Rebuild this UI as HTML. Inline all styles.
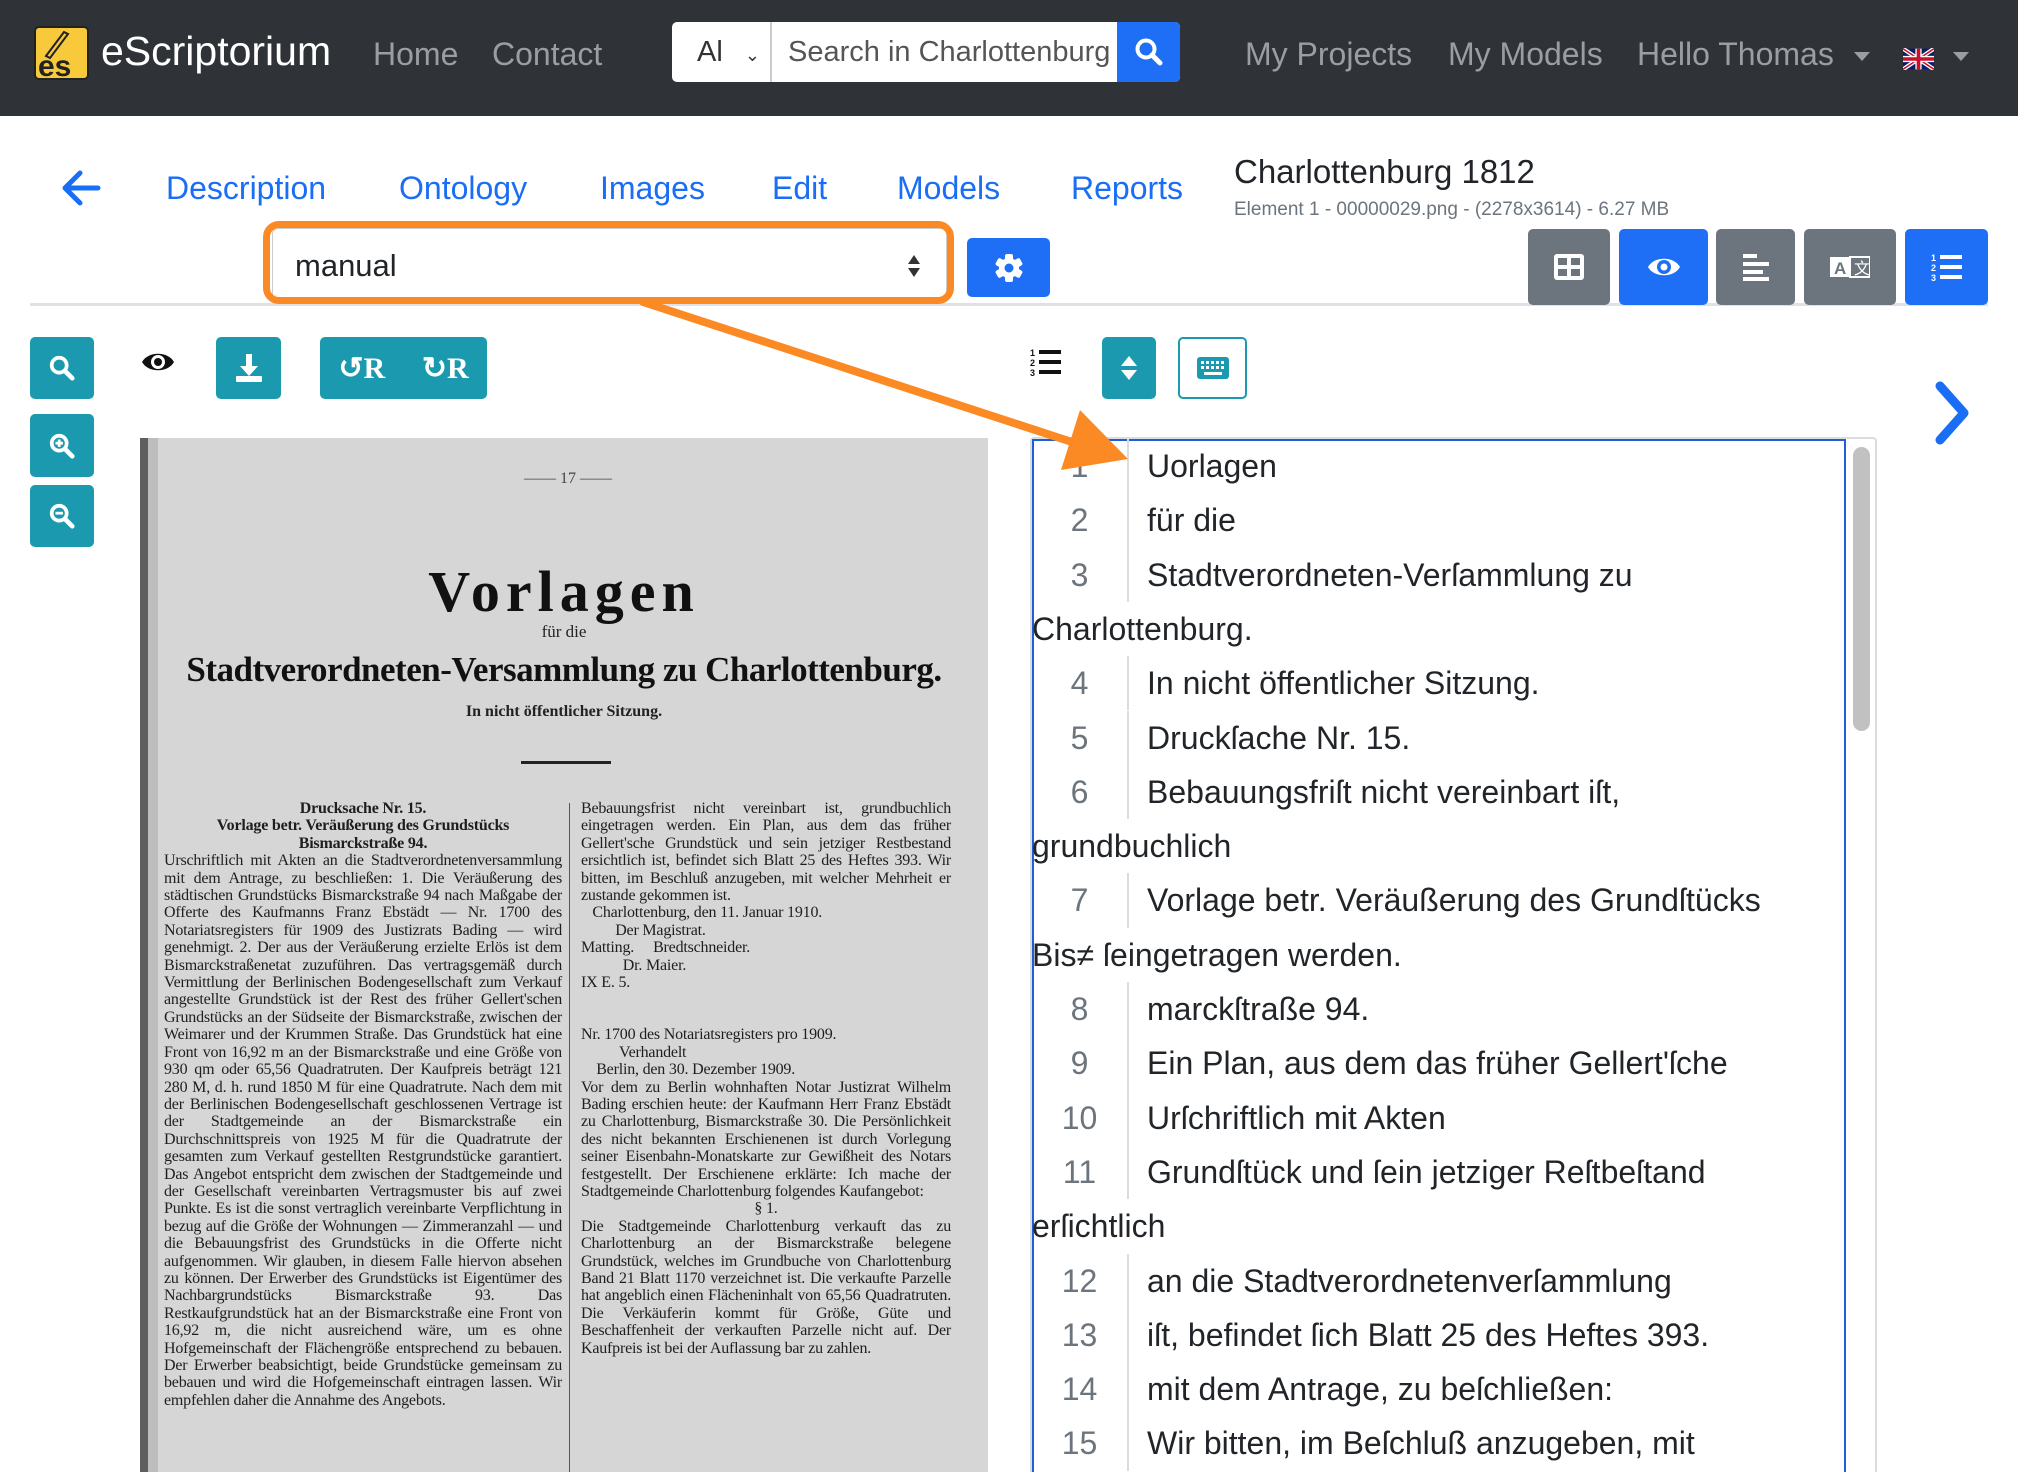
<!DOCTYPE html>
<html><head><meta charset="utf-8">
<style>
*{box-sizing:border-box;margin:0;padding:0}
body{width:2018px;height:1472px;overflow:hidden;background:#fff;font-family:"Liberation Sans",sans-serif;position:relative}
.a{position:absolute}
.nav{left:0;top:0;width:2018px;height:116px;background:#2f3337}
.nl{color:#9b9ea1;font-size:32px;top:36px}
.tab{color:#1a6ef5;font-size:32px;top:170px}
.btn{position:absolute;border-radius:5px;display:flex;align-items:center;justify-content:center}
.teal{background:#1b9aaf}
.gray{background:#6c757d}
.blue{background:#1e6ff5}
.row{position:absolute;left:1032px;width:810px;height:54.3px;line-height:54.3px;font-size:32px;color:#212529;white-space:nowrap}
.row .n{position:absolute;left:0;width:97px;text-align:center;color:#6c757d;border-right:2px solid #dcdcdc;height:54.3px}
.row .t{position:absolute;left:115px}
.scan{left:140px;top:438px;width:848px;height:1034px;background:#d6d6d6;overflow:hidden;font-family:"Liberation Serif",serif;color:#2a2a2a}
.col{position:absolute;font-size:16px;line-height:17.4px;text-align:justify;color:#1e1e1e;letter-spacing:-0.2px}
</style></head><body>
<div class="a nav"></div>
<svg class="a" style="left:34px;top:26px" width="55" height="54" viewBox="0 0 55 54"><rect x="1" y="1" width="53" height="52" rx="4" fill="#f7c93b" stroke="#222" stroke-width="2"/><path d="M12 30 L30 6 L34 8 L16 32Z" fill="none" stroke="#222" stroke-width="2"/><text x="4" y="50" font-family="Liberation Sans" font-size="30" font-weight="bold" fill="#222">es</text></svg>
<div class="a" style="left:101px;top:28px;font-size:41px;color:#fff">eScriptorium</div>
<div class="a nl" style="left:373px">Home</div>
<div class="a nl" style="left:492px">Contact</div>
<div class="a" style="left:672px;top:22px;width:508px;height:60px;background:#fff;border-radius:5px;overflow:hidden">
 <div class="a" style="left:0;top:0;width:100px;height:60px;border-right:2px solid #ccc;font-size:29px;line-height:60px;padding-left:25px;color:#333">Al <span style="font-size:18px;margin-left:14px">&#8964;</span></div>
 <div class="a" style="left:116px;top:0;font-size:29px;line-height:60px;color:#555;white-space:nowrap;width:326px;overflow:hidden">Search in Charlottenburg</div>
 <div class="a blue" style="left:445px;top:0;width:63px;height:60px"><svg style="position:absolute;left:17px;top:15px" width="30" height="30" viewBox="0 0 30 30"><circle cx="12" cy="12" r="8.5" fill="none" stroke="#fff" stroke-width="4"/><path d="M18 18l8 8" stroke="#fff" stroke-width="5" stroke-linecap="round"/></svg></div>
</div>
<div class="a nl" style="left:1245px">My Projects</div>
<div class="a nl" style="left:1448px">My Models</div>
<div class="a nl" style="left:1637px">Hello Thomas</div>
<div class="a" style="left:1854px;top:52px;border:8px solid transparent;border-top:9px solid #9b9ea1"></div>
<svg class="a" style="left:1903px;top:48px" width="31" height="22" viewBox="0 0 60 40"><rect width="60" height="40" fill="#012169"/><path d="M0 0L60 40M60 0L0 40" stroke="#fff" stroke-width="8"/><path d="M0 0L60 40M60 0L0 40" stroke="#c8102e" stroke-width="3"/><path d="M30 0V40M0 20H60" stroke="#fff" stroke-width="12"/><path d="M30 0V40M0 20H60" stroke="#c8102e" stroke-width="7"/></svg>
<div class="a" style="left:1953px;top:52px;border:8px solid transparent;border-top:9px solid #9b9ea1"></div>

<svg class="a" style="left:60px;top:168px" width="42" height="40" viewBox="0 0 42 40"><path d="M38 20H6M20 5L5 20l15 15" fill="none" stroke="#1a6ef5" stroke-width="5" stroke-linecap="round" stroke-linejoin="round"/></svg>
<div class="a tab" style="left:166px">Description</div>
<div class="a tab" style="left:399px">Ontology</div>
<div class="a tab" style="left:600px">Images</div>
<div class="a tab" style="left:772px">Edit</div>
<div class="a tab" style="left:897px">Models</div>
<div class="a tab" style="left:1071px">Reports</div>
<div class="a" style="left:1234px;top:153px;font-size:33px;color:#212529">Charlottenburg 1812</div>
<div class="a" style="left:1234px;top:199px;font-size:19px;color:#6c757d">Element 1 - 00000029.png - (2278x3614) - 6.27 MB</div>

<div class="a" style="left:30px;top:303px;width:1958px;height:3px;background:#dee2e6"></div>
<div class="a" style="left:272px;top:228px;width:675px;height:74px;border:1px solid #ccc;border-radius:6px;background:#fff"></div>
<div class="a" style="left:263px;top:221px;width:691px;height:83px;border:7px solid #fb8a24;border-radius:16px"></div>
<div class="a" style="left:295px;top:248px;font-size:31px;color:#212529">manual</div>
<svg class="a" style="left:905px;top:253px" width="18" height="26" viewBox="0 0 18 26"><path d="M9 2l6 9H3zM9 24l6-9H3z" fill="#333"/></svg>
<div class="btn blue" style="left:967px;top:238px;width:83px;height:59px"><svg width="32" height="32" viewBox="0 0 32 32"><g fill="#fff"><circle cx="16" cy="16" r="10"/><rect x="12" y="2" width="8" height="28" rx="2"/><rect x="12" y="2" width="8" height="28" rx="2" transform="rotate(60 16 16)"/><rect x="12" y="2" width="8" height="28" rx="2" transform="rotate(120 16 16)"/></g><circle cx="16" cy="16" r="4.5" fill="#1e6ff5"/></svg></div>

<div class="btn gray" style="left:1528px;top:229px;width:82px;height:76px"><svg width="32" height="28" viewBox="0 0 32 28"><rect x="1" y="1" width="30" height="26" rx="3" fill="#fff"/><rect x="5" y="5" width="9" height="7" fill="#6c757d"/><rect x="18" y="5" width="9" height="7" fill="#6c757d"/><rect x="5" y="16" width="9" height="7" fill="#6c757d"/><rect x="18" y="16" width="9" height="7" fill="#6c757d"/></svg></div>
<div class="btn blue" style="left:1619px;top:229px;width:89px;height:76px"><svg width="36" height="26" viewBox="0 0 36 26"><path d="M2 13C8 2 28 2 34 13C28 24 8 24 2 13Z" fill="#fff"/><circle cx="18" cy="13" r="7" fill="#1e6ff5"/><circle cx="18" cy="13" r="3.5" fill="#fff"/></svg></div>
<div class="btn gray" style="left:1716px;top:229px;width:79px;height:76px"><svg width="30" height="30" viewBox="0 0 30 30" fill="#fff"><rect x="2" y="2" width="14" height="4"/><rect x="2" y="10" width="26" height="4"/><rect x="2" y="18" width="20" height="4"/><rect x="2" y="25" width="26" height="4"/></svg></div>
<div class="btn gray" style="left:1804px;top:229px;width:92px;height:76px"><svg width="40" height="24" viewBox="0 0 40 24"><rect x="0" y="2" width="20" height="20" fill="#fff"/><rect x="20" y="2" width="20" height="20" fill="none" stroke="#fff" stroke-width="2"/><text x="4" y="19" font-size="17" font-family="Liberation Sans" font-weight="bold" fill="#6c757d">A</text><text x="24" y="19" font-size="16" fill="#fff" font-family="Liberation Sans">文</text></svg></div>
<div class="btn blue" style="left:1905px;top:229px;width:83px;height:76px"><svg width="32" height="30" viewBox="0 0 32 30" fill="#fff"><text x="0" y="9" font-size="9" font-family="Liberation Sans" font-weight="bold">1</text><text x="0" y="19" font-size="9" font-family="Liberation Sans" font-weight="bold">2</text><text x="0" y="29" font-size="9" font-family="Liberation Sans" font-weight="bold">3</text><rect x="9" y="3" width="22" height="4"/><rect x="9" y="13" width="22" height="4"/><rect x="9" y="23" width="22" height="4"/></svg></div>

<div class="btn teal" style="left:30px;top:337px;width:64px;height:62px"><svg width="28" height="28" viewBox="0 0 30 30"><circle cx="12" cy="12" r="8" fill="none" stroke="#fff" stroke-width="4"/><path d="M18 18l8 8" stroke="#fff" stroke-width="5" stroke-linecap="round"/></svg></div>
<svg class="a" style="left:139px;top:349px" width="38" height="26" viewBox="0 0 36 26"><path d="M2 13C8 2 28 2 34 13C28 24 8 24 2 13Z" fill="#111"/><circle cx="18" cy="13" r="7" fill="#fff"/><circle cx="18" cy="13" r="4" fill="#111"/></svg>
<div class="btn teal" style="left:216px;top:337px;width:65px;height:62px"><svg width="30" height="32" viewBox="0 0 30 32" fill="#fff"><rect x="12" y="2" width="6" height="14"/><path d="M6 14h18l-9 10z"/><rect x="2" y="24" width="26" height="6" rx="1"/></svg></div>
<div class="btn teal" style="left:320px;top:337px;width:167px;height:62px;color:#fff;font-family:'Liberation Serif',serif;font-weight:bold;font-size:30px;justify-content:space-around">
 <span>&#8634;R</span><span>&#8635;R</span></div>
<div class="btn teal" style="left:30px;top:414px;width:64px;height:63px"><svg width="28" height="28" viewBox="0 0 30 30"><circle cx="12" cy="12" r="8" fill="none" stroke="#fff" stroke-width="4"/><path d="M18 18l8 8" stroke="#fff" stroke-width="5" stroke-linecap="round"/><path d="M8 12h8M12 8v8" stroke="#fff" stroke-width="3"/></svg></div>
<div class="btn teal" style="left:30px;top:485px;width:64px;height:62px"><svg width="28" height="28" viewBox="0 0 30 30"><circle cx="12" cy="12" r="8" fill="none" stroke="#fff" stroke-width="4"/><path d="M18 18l8 8" stroke="#fff" stroke-width="5" stroke-linecap="round"/><path d="M8 12h8" stroke="#fff" stroke-width="3"/></svg></div>

<svg class="a" style="left:1029px;top:347px" width="34" height="30" viewBox="0 0 32 30" fill="#111"><text x="0" y="9" font-size="9" font-family="Liberation Sans" font-weight="bold">1</text><text x="0" y="19" font-size="9" font-family="Liberation Sans" font-weight="bold">2</text><text x="0" y="29" font-size="9" font-family="Liberation Sans" font-weight="bold">3</text><rect x="9" y="3" width="22" height="4"/><rect x="9" y="13" width="22" height="4"/><rect x="9" y="23" width="22" height="4"/></svg>
<div class="btn teal" style="left:1102px;top:337px;width:54px;height:62px"><svg width="18" height="28" viewBox="0 0 18 28" fill="#fff"><path d="M9 2l8 10H1zM9 26l8-10H1z"/></svg></div>
<div class="btn" style="left:1178px;top:337px;width:69px;height:62px;border:2px solid #1b9aaf"><svg width="32" height="22" viewBox="0 0 32 22"><rect x="0" y="0" width="32" height="22" rx="3" fill="#1b9aaf"/><g fill="#fff"><rect x="4" y="4" width="3" height="3"/><rect x="9" y="4" width="3" height="3"/><rect x="14" y="4" width="3" height="3"/><rect x="19" y="4" width="3" height="3"/><rect x="24" y="4" width="3" height="3"/><rect x="4" y="9" width="3" height="3"/><rect x="9" y="9" width="3" height="3"/><rect x="14" y="9" width="3" height="3"/><rect x="19" y="9" width="3" height="3"/><rect x="24" y="9" width="3" height="3"/><rect x="7" y="15" width="18" height="3"/></g></svg></div>
<svg class="a" style="left:1932px;top:380px" width="40" height="66" viewBox="0 0 40 66"><path d="M8 6l24 27L8 60" fill="none" stroke="#1a6ef5" stroke-width="9" stroke-linecap="round" stroke-linejoin="round"/></svg>

<div class="a scan">
 <div class="a" style="left:0;top:0;width:8px;height:1034px;background:#5e5e5e"></div>
 <div class="a" style="left:8px;top:0;width:10px;height:1034px;background:#bdbdbd"></div>
 <div class="a" style="left:384px;top:32px;font-size:16px;color:#444">—— 17 ——</div>
 <div class="a" style="left:0;width:848px;top:120px;text-align:center;font-size:58px;font-weight:bold;letter-spacing:6px;color:#111">Vorlagen</div>
 <div class="a" style="left:0;width:848px;top:184px;text-align:center;font-size:17px;color:#222">für die</div>
 <div class="a" style="left:0;width:848px;top:212px;text-align:center;font-size:35px;font-weight:bold;color:#111;letter-spacing:-0.5px">Stadtverordneten-Versammlung zu Charlottenburg.</div>
 <div class="a" style="left:0;width:848px;top:265px;text-align:center;font-size:16px;font-weight:bold;color:#222">In nicht öffentlicher Sitzung.</div>
 <div class="a" style="left:381px;top:323px;width:90px;height:3px;background:#222"></div>
 <div class="a" style="left:429px;top:365px;width:1px;height:670px;background:#555"></div>
 <div class="col" style="left:24px;top:362px;width:398px">
 <div style="text-align:center;font-weight:bold">Drucksache Nr. 15.</div>
 <div style="text-align:center;font-weight:bold">Vorlage betr. Veräußerung des Grundstücks Bismarckstraße 94.</div>
 Urschriftlich mit Akten an die Stadtverordnetenversammlung mit dem Antrage, zu beschließen: 1. Die Veräußerung des städtischen Grundstücks Bismarckstraße 94 nach Maßgabe der Offerte des Kaufmanns Franz Ebstädt — Nr. 1700 des Notariatsregisters für 1909 des Justizrats Bading — wird genehmigt. 2. Der aus der Veräußerung erzielte Erlös ist dem Bismarckstraßenetat zuzuführen. Das vertragsgemäß durch Vermittlung der Berlinischen Bodengesellschaft zum Verkauf angestellte Grundstück ist der Rest des früher Gellert'schen Grundstücks an der Südseite der Bismarckstraße, zwischen der Weimarer und der Krummen Straße. Das Grundstück hat eine Front von 16,92 m an der Bismarckstraße und eine Größe von 930 qm oder 65,56 Quadratruten. Der Kaufpreis beträgt 121 280 M, d. h. rund 1850 M für eine Quadratrute. Nach dem mit der Berlinischen Bodengesellschaft geschlossenen Vertrage ist der Stadtgemeinde an der Bismarckstraße ein Durchschnittspreis von 1925 M für die Quadratrute der gesamten zum Verkauf gestellten Restgrundstücke garantiert. Das Angebot entspricht dem zwischen der Stadtgemeinde und der Gesellschaft vereinbarten Vertragsmuster bis auf zwei Punkte. Es ist die sonst vertraglich vereinbarte Verpflichtung in bezug auf die Größe der Wohnungen — Zimmeranzahl — und die Bebauungsfrist des Grundstücks in die Offerte nicht aufgenommen. Wir glauben, in diesem Falle hiervon absehen zu können. Der Erwerber des Grundstücks ist Eigentümer des Nachbargrundstücks Bismarckstraße 93. Das Restkaufgrundstück hat an der Bismarckstraße eine Front von 16,92 m, die nicht ausreichend wäre, um es ohne Hofgemeinschaft der Flächengröße entsprechend zu bebauen. Der Erwerber beabsichtigt, beide Grundstücke gemeinsam zu bebauen und wird die Hofgemeinschaft eintragen lassen. Wir empfehlen daher die Annahme des Angebots.
 </div>
 <div class="col" style="left:441px;top:362px;width:370px">
 Bebauungsfrist nicht vereinbart ist, grundbuchlich eingetragen werden. Ein Plan, aus dem das früher Gellert'sche Grundstück und sein jetziger Restbestand ersichtlich ist, befindet sich Blatt 25 des Heftes 393. Wir bitten, im Beschluß anzugeben, mit welcher Mehrheit er zustande gekommen ist. <br>&nbsp;&nbsp;&nbsp;Charlottenburg, den 11. Januar 1910.<br>&nbsp;&nbsp;&nbsp;&nbsp;&nbsp;&nbsp;&nbsp;&nbsp;&nbsp;Der Magistrat.<br>Matting. &nbsp;&nbsp;&nbsp;&nbsp;Bredtschneider.<br>&nbsp;&nbsp;&nbsp;&nbsp;&nbsp;&nbsp;&nbsp;&nbsp;&nbsp;&nbsp;&nbsp;Dr. Maier.<br>IX E. 5.<br><br><br>
 Nr. 1700 des Notariatsregisters pro 1909.<br>&nbsp;&nbsp;&nbsp;&nbsp;&nbsp;&nbsp;&nbsp;&nbsp;&nbsp;&nbsp;Verhandelt<br>&nbsp;&nbsp;&nbsp;&nbsp;Berlin, den 30. Dezember 1909.<br>
 Vor dem zu Berlin wohnhaften Notar Justizrat Wilhelm Bading erschien heute: der Kaufmann Herr Franz Ebstädt zu Charlottenburg, Bismarckstraße 30. Die Persönlichkeit des nicht bekannten Erschienenen ist durch Vorlegung seiner Eisenbahn-Monatskarte zur Gewißheit des Notars festgestellt. Der Erschienene erklärte: Ich mache der Stadtgemeinde Charlottenburg folgendes Kaufangebot: <div style="text-align:center">§ 1.</div> Die Stadtgemeinde Charlottenburg verkauft das zu Charlottenburg an der Bismarckstraße belegene Grundstück, welches im Grundbuche von Charlottenburg Band 21 Blatt 1170 verzeichnet ist. Die verkaufte Parzelle hat angeblich einen Flächeninhalt von 65,56 Quadratruten. Die Verkäuferin kommt für Größe, Güte und Beschaffenheit der verkauften Parzelle nicht auf. Der Kaufpreis ist bei der Auflassung bar zu zahlen.
 </div>
</div>

<div class="a" style="left:1030px;top:437px;width:847px;height:1035px;border:2px solid #dcdcdc;border-bottom:none;border-radius:4px 4px 0 0"></div>
<div class="a" style="left:1032px;top:439px;width:814px;height:1033px;border:2px solid #1f5fd6;border-bottom:none"></div>
<div class="a" style="left:1853px;top:447px;width:17px;height:284px;background:#c1c1c1;border-radius:9px"></div>

<div class="row" style="top:439px"><span class="n">1</span><span class="t">Uorlagen</span></div>
<div class="row" style="top:493.3px"><span class="n">2</span><span class="t">für die</span></div>
<div class="row" style="top:547.6px"><span class="n">3</span><span class="t">Stadtverordneten-Verſammlung zu</span></div>
<div class="row" style="top:601.9px">Charlottenburg.</div>
<div class="row" style="top:656.2px"><span class="n">4</span><span class="t">In nicht öffentlicher Sitzung.</span></div>
<div class="row" style="top:710.5px"><span class="n">5</span><span class="t">Druckſache Nr. 15.</span></div>
<div class="row" style="top:764.8px"><span class="n">6</span><span class="t">Bebauungsfriſt nicht vereinbart iſt,</span></div>
<div class="row" style="top:819.1px">grundbuchlich</div>
<div class="row" style="top:873.4px"><span class="n">7</span><span class="t">Vorlage betr. Veräußerung des Grundſtücks</span></div>
<div class="row" style="top:927.7px">Bis≠ ſeingetragen werden.</div>
<div class="row" style="top:982px"><span class="n">8</span><span class="t">marckſtraße 94.</span></div>
<div class="row" style="top:1036.3px"><span class="n">9</span><span class="t">Ein Plan, aus dem das früher Gellert'ſche</span></div>
<div class="row" style="top:1090.6px"><span class="n">10</span><span class="t">Urſchriftlich mit Akten</span></div>
<div class="row" style="top:1144.9px"><span class="n">11</span><span class="t">Grundſtück und ſein jetziger Reſtbeſtand</span></div>
<div class="row" style="top:1199.2px">erſichtlich</div>
<div class="row" style="top:1253.5px"><span class="n">12</span><span class="t">an die Stadtverordnetenverſammlung</span></div>
<div class="row" style="top:1307.8px"><span class="n">13</span><span class="t">iſt, befindet ſich Blatt 25 des Heftes 393.</span></div>
<div class="row" style="top:1362.1px"><span class="n">14</span><span class="t">mit dem Antrage, zu beſchließen:</span></div>
<div class="row" style="top:1416.4px"><span class="n">15</span><span class="t">Wir bitten, im Beſchluß anzugeben, mit</span></div>

<svg class="a" style="left:0;top:0" width="2018" height="1472" viewBox="0 0 2018 1472"><path d="M643 302L1075 443" stroke="#fb8a24" stroke-width="8" stroke-linecap="round"/><path d="M1128 459L1061 470L1080 410Z" fill="#fb8a24"/></svg>
</body></html>
